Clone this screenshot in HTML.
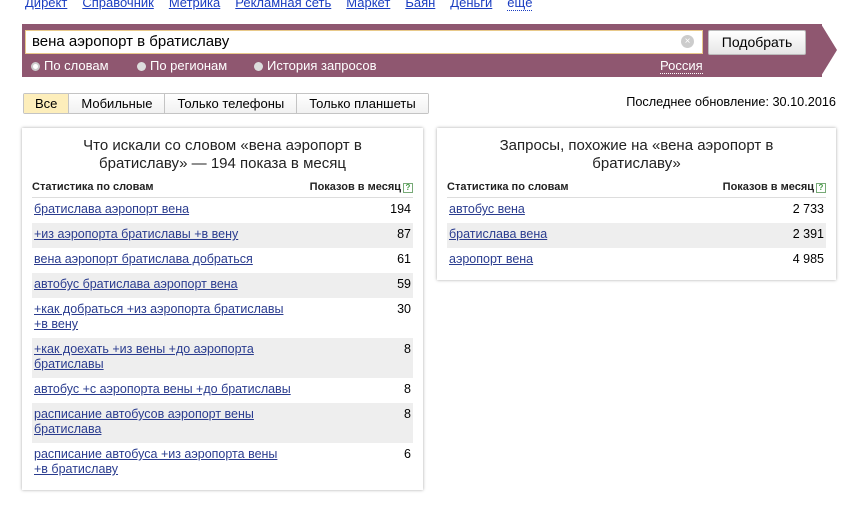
<!DOCTYPE html>
<html><head><meta charset="utf-8"><style>
*{margin:0;padding:0;box-sizing:border-box}
body{width:850px;height:514px;background:#fff;font-family:"Liberation Sans",Arial,sans-serif;position:relative;overflow:hidden;color:#000}
.nav{position:absolute;top:-5px;left:25px;font-size:13px;white-space:nowrap}
.nav a{color:#1a3dc1;text-decoration:underline;margin-right:15px}
.nav .d{color:#1a3dc1;border-bottom:1px dotted #1a3dc1;text-decoration:none}
.band{position:absolute;left:22px;top:24px;width:800px;height:53px;background:#8f5770}
.tip{position:absolute;left:821px;top:24px;width:0;height:0;border-top:26.5px solid transparent;border-bottom:26.5px solid transparent;border-left:16px solid #8f5770}
.inp{position:absolute;left:25px;top:30px;width:678px;height:24px;background:#fff;border:1px solid #e8c98a;font-size:15px;padding:2px 6px}
.clr{position:absolute;left:681px;top:35px;width:13px;height:13px;border-radius:50%;background:#ccc;color:#fff;font-size:10px;line-height:13px;text-align:center}
.btn{position:absolute;left:708px;top:30px;width:98px;height:25px;background:linear-gradient(#fff,#e6e6e6);border:1px solid #bbb;border-radius:2px;font-size:14px;text-align:center;line-height:23px}
.rad{position:absolute;top:58px;font-size:13px;color:#fff}
.rad i{display:inline-block;width:9px;height:9px;border-radius:50%;background:#ddd;margin-right:4px;vertical-align:-1px}
.ru{position:absolute;left:660px;top:58px;font-size:13px;color:#fff;border-bottom:1px dotted #fff}
.tabs{position:absolute;left:23px;top:93px;height:21px;display:flex;border:1px solid #c4c4c4;border-radius:2px;font-size:13px}
.tabs div{padding:0 12px;line-height:19px;border-left:1px solid #c4c4c4;background:linear-gradient(#fff,#f1f1f1)}
.tabs div:first-child{border-left:none;background:#fdeebb;padding:0 11px}
.upd{position:absolute;right:14px;top:95px;font-size:12.7px}
.box{position:absolute;background:#fff;box-shadow:0 0 3px rgba(0,0,0,.35)}
.ttl{text-align:center;font-size:15px;line-height:18px;color:#222;padding:9px 40px 0}
.hd{display:flex;justify-content:space-between;font-size:11px;font-weight:bold;margin:8px 10px 0;border-bottom:1px solid #ddd;height:17px;color:#222}
.hd b{display:inline-block;width:10px;height:10px;border:1px solid #7a7;font-size:8px;line-height:8px;text-align:center;color:#494;margin-left:2px;vertical-align:0}
.row{display:flex;justify-content:space-between;margin:0 10px;padding:4px 2px 0;font-size:12.5px;line-height:15px;height:25px}
.row.t{height:40px}
.row:nth-of-type(even){background:#eee}
.row a{color:#2a3c8f;text-decoration:underline;width:262px}
</style></head><body>
<div class="nav"><a>Директ</a><a>Справочник</a><a>Метрика</a><a>Рекламная сеть</a><a>Маркет</a><a>Баян</a><a>Деньги</a><span class="d">ещё</span></div>
<div class="band"></div><div class="tip"></div>
<div class="inp">вена аэропорт в братиславу</div><div class="clr">×</div>
<div class="btn">Подобрать</div>
<div class="rad" style="left:31px"><i style="background:#fff;border:2px solid #ccc"></i>По словам</div>
<div class="rad" style="left:137px"><i></i>По регионам</div>
<div class="rad" style="left:254px"><i></i>История запросов</div>
<div class="ru">Россия</div>
<div class="tabs"><div>Все</div><div>Мобильные</div><div>Только телефоны</div><div>Только планшеты</div></div>
<div class="upd">Последнее обновление: 30.10.2016</div>
<div class="box" style="left:22px;top:128px;width:401px;height:362px">
<div class="ttl">Что искали со словом «вена аэропорт в братиславу» — 194 показа в месяц</div>
<div class="hd"><span>Статистика по словам</span><span>Показов в месяц<b>?</b></span></div>
<div>
<div class="row"><a>братислава аэропорт вена</a><span>194</span></div>
<div class="row"><a>+из аэропорта братиславы +в вену</a><span>87</span></div>
<div class="row"><a>вена аэропорт братислава добраться</a><span>61</span></div>
<div class="row"><a>автобус братислава аэропорт вена</a><span>59</span></div>
<div class="row t"><a>+как добраться +из аэропорта братиславы +в вену</a><span>30</span></div>
<div class="row t"><a>+как доехать +из вены +до аэропорта братиславы</a><span>8</span></div>
<div class="row"><a style="width:300px">автобус +с аэропорта вены +до братиславы</a><span>8</span></div>
<div class="row t"><a>расписание автобусов аэропорт вены братислава</a><span>8</span></div>
<div class="row t"><a style="width:255px">расписание автобуса +из аэропорта вены +в братиславу</a><span>6</span></div>
</div></div>
<div class="box" style="left:437px;top:128px;width:399px;height:152px">
<div class="ttl">Запросы, похожие на «вена аэропорт в братиславу»</div>
<div class="hd"><span>Статистика по словам</span><span>Показов в месяц<b>?</b></span></div>
<div>
<div class="row"><a>автобус вена</a><span>2 733</span></div>
<div class="row"><a>братислава вена</a><span>2 391</span></div>
<div class="row"><a>аэропорт вена</a><span>4 985</span></div>
</div></div>
</body></html>
